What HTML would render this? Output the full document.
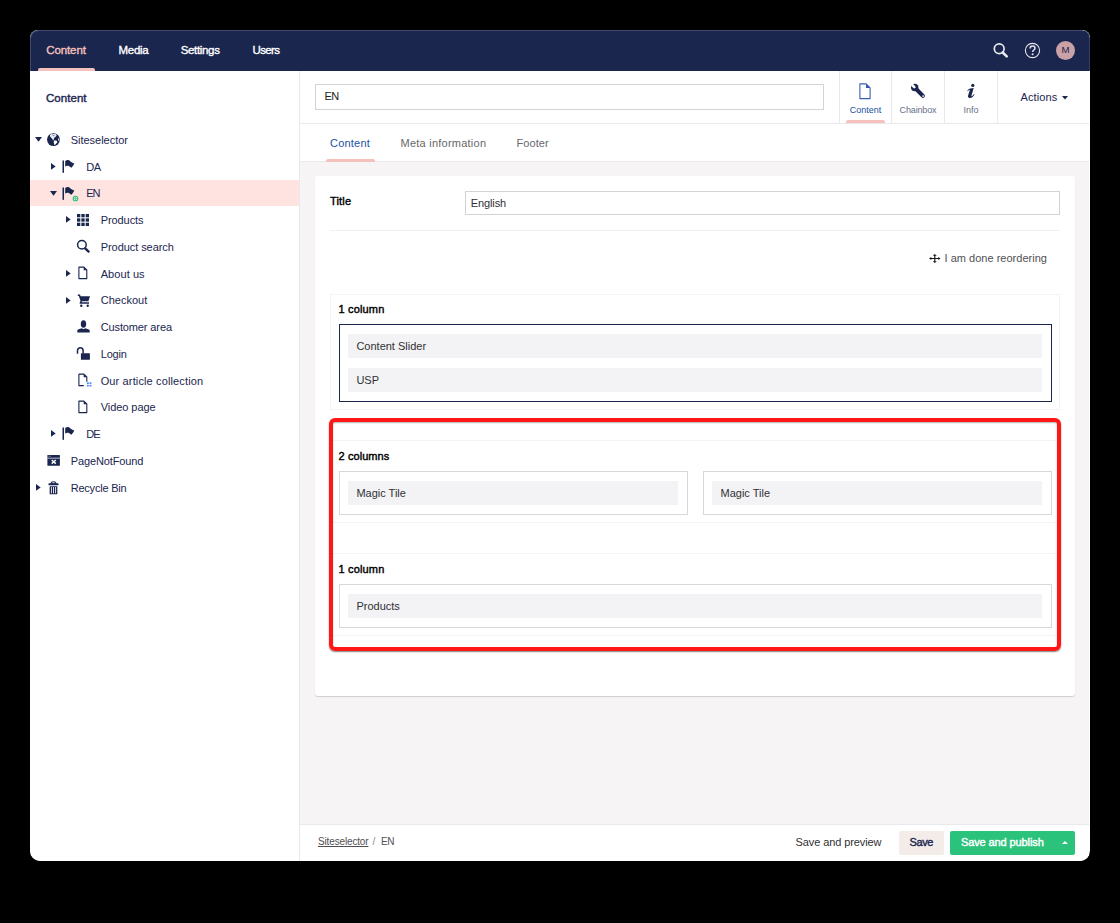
<!DOCTYPE html>
<html>
<head>
<meta charset="utf-8">
<title>Umbraco</title>
<style>
*{box-sizing:border-box;margin:0;padding:0}
html,body{width:1120px;height:923px;background:#000;overflow:hidden}
body{font-family:"Liberation Sans",sans-serif;font-size:11px;color:#1b264f;position:relative}
.abs{position:absolute}
.t{position:absolute;white-space:nowrap;line-height:14px;height:14px}
.b{-webkit-text-stroke:.4px currentColor}
svg{position:absolute;overflow:visible}
#win{position:absolute;left:30px;top:30px;width:1060px;height:831px;background:#fff;border-radius:8px 8px 10.500px 10.500px;overflow:hidden}
#hdr{position:absolute;left:0;top:0;width:1060px;height:41px;background:#1b264f;box-shadow:inset 1px 1px 0 rgba(255,255,255,.17),inset -1px 0 0 rgba(255,255,255,.12);border-radius:8px 8px 0 0}
#hdr .t{color:#fff;font-size:11.5px;-webkit-text-stroke:.35px currentColor}
#side{position:absolute;left:0;top:41px;width:270px;height:790px;background:#fff;border-right:1px solid #e9e9eb}
#ed{position:absolute;left:270px;top:41px;width:789px;height:790px;background:#f6f4f4;overflow:hidden}
#edh{position:absolute;left:0;top:0;width:790px;height:53px;background:#fff;border-bottom:1px solid #e9e9eb}
#tabs{position:absolute;left:0;top:53px;width:790px;height:38px;background:#fff;border-bottom:1px solid #ebe9e9}
#foot{position:absolute;left:0;top:753px;width:790px;height:37px;background:#fff;border-top:1px solid #e9e9eb}
#panel{position:absolute;left:15px;top:105px;width:760px;height:520px;background:#fff;border-radius:3px;box-shadow:0 1px 1px rgba(0,0,0,.16)}
.pink{position:absolute;background:#f5c1bc;height:3px;border-radius:2px 2px 0 0}
.row{position:absolute;background:#f3f3f5;height:24px}
.cell{position:absolute;border:1px solid #d8d7d9;background:#fff}
.sec{position:absolute;border:1px solid #f3f3f5;background:#fff}
.sep{position:absolute;top:0;width:1px;height:52px;background:#e9e9eb}
</style>
</head>
<body>
<div id="win">
  <!-- ===== top header ===== -->
  <div id="hdr">
    <span class="t" style="left:16.2px;top:13px;color:#f5c1bc;letter-spacing:-.09px">Content</span>
    <span class="t" style="left:88.5px;top:13px;letter-spacing:-.27px">Media</span>
    <span class="t" style="left:150.7px;top:13px;letter-spacing:-.33px">Settings</span>
    <span class="t" style="left:222.5px;top:13px;letter-spacing:-.63px">Users</span>
    <div class="pink" style="left:8px;top:38px;width:57px"></div>
    <svg style="left:960px;top:10px;opacity:.9" width="24" height="22" viewBox="0 0 24 22">
      <circle cx="9.2" cy="8.75" r="4.9" fill="none" stroke="#fff" stroke-width="1.7"/>
      <path d="M12.7 12.5 L16.700 16.400" stroke="#fff" stroke-width="2.600" stroke-linecap="round"/>
    </svg>
    <svg style="left:994px;top:12px;opacity:.88" width="17" height="17" viewBox="0 0 17 17">
      <circle cx="8.5" cy="8.5" r="7.1" fill="none" stroke="#fff" stroke-width="1.1"/>
      <path d="M6.1 6.6 C6.1 4.9 7.2 4.1 8.6 4.1 C10 4.1 11 5 11 6.3 C11 7.9 8.6 8.2 8.6 10.1" fill="none" stroke="#fff" stroke-width="1.5"/>
      <circle cx="8.6" cy="12.3" r="1" fill="#fff"/>
    </svg>
    <div class="abs" style="left:1026px;top:10.8px;width:19px;height:19px;border-radius:50%;background:#c9a1a6"></div>
    <span class="t" style="left:1026px;top:13.400px;width:19px;text-align:center;font-size:8.800px;-webkit-text-stroke:0;color:#1b264f;letter-spacing:0;transform:scaleX(1.1)">M</span>
  </div>

  <!-- ===== sidebar ===== -->
  <div id="side">
    <span class="t b" style="left:16px;top:20px;font-size:11.5px;letter-spacing:.04px">Content</span>
    
    <svg style="left:4.9px;top:66.3px" width="7" height="4.800" viewBox="0 0 7 4.8"><path d="M0 0L7 0L3.500 4.800Z" fill="#1b264f"/></svg>
    <svg style="left:15.8px;top:61.3px" width="14" height="14" viewBox="0 0 14 14" fill="#1b264f"><g transform="translate(.45 .6)"><circle cx="7" cy="7" r="6.4" fill="#1b264f"/><path d="M3.500 2.600C4 1.900 4.700 1.500 5.400 1.450C6.300 2 7.100 1.500 8 1.500C9 1.600 9.800 2 10.200 2.650C9.800 3.300 9.500 3.900 8.900 4.350C8.300 4.600 7.900 5.100 7.600 5.550C7.400 6.300 7.300 7 7.100 7.650L6.400 7.650C6.200 7 6 6.300 5.600 5.800C5 5.400 4.400 5 4 4.450C3.700 3.800 3.500 3.200 3.500 2.600Z" fill="#fff" opacity=".92"/><path d="M7.650 7.950C8.500 7.900 9.300 8 10.100 8.250C10.500 8.500 10.800 8.900 10.900 9.300C10.500 10 10.100 10.600 9.550 11.200C9.100 11.700 8.700 12.200 8.200 12.600C7.900 12.200 7.700 11.700 7.650 11.200C7.500 10.500 7.300 9.900 7.300 9.300C7.300 8.800 7.400 8.400 7.650 7.950Z" fill="#fff"/><path d="M12 5.500C12.400 5.700 12.700 6 12.800 6.350C12.900 7 12.850 7.700 12.700 8.250L11.800 8.250C11.650 7.800 11.550 7.300 11.600 6.900C11.650 6.400 11.800 5.900 12 5.500Z" fill="#fff" opacity=".8"/><ellipse cx="7.100" cy="3" rx="1.100" ry=".6" fill="#1b264f" opacity=".55"/></g></svg>
    <span class="t" style="left:40.7px;top:62.0px;letter-spacing:-0.02px">Siteselector</span>
    <svg style="left:20.7px;top:91.8px" width="4.7" height="6.800" viewBox="0 0 4.7 6.8"><path d="M0 0L4.700 3.400L0 6.800Z" fill="#1b264f"/></svg>
    <svg style="left:30.8px;top:88.0px" width="14" height="14" viewBox="0 0 14 14" fill="#1b264f"><rect x="1.500" y="1.500" width="1.500" height="12.300"/><path d="M4.200 2C5.100 1.200 6.200 .900 7.100 1C8.600 1.200 9.400 2.600 10.600 3.200C11.500 3.700 12.400 4.100 13.300 4.400C12.600 5.900 11.600 7.400 10.400 8.800C9.300 8.100 8.400 7 7.100 6.700C6.100 6.500 5.100 6.900 4.200 7.600Z"/></svg>
    <span class="t" style="left:56.2px;top:88.7px;letter-spacing:-0.44px">DA</span>
    <div class="abs" style="left:0;top:109px;width:269px;height:26px;background:#fee3e0"></div>
    <svg style="left:19.9px;top:119.8px" width="7" height="4.800" viewBox="0 0 7 4.8"><path d="M0 0L7 0L3.500 4.800Z" fill="#1b264f"/></svg>
    <svg style="left:30.8px;top:114.8px" width="14" height="14" viewBox="0 0 14 14" fill="#1b264f"><rect x="1.500" y="1.500" width="1.500" height="12.300"/><path d="M4.200 2C5.100 1.200 6.200 .900 7.100 1C8.600 1.200 9.400 2.600 10.600 3.200C11.500 3.700 12.400 4.100 13.300 4.400C12.600 5.900 11.600 7.400 10.400 8.800C9.300 8.100 8.400 7 7.100 6.700C6.100 6.500 5.100 6.900 4.200 7.600Z"/></svg>
    <svg style="left:41.6px;top:123.5px" width="7" height="7" viewBox="0 0 7 7"><circle cx="3.5" cy="3.5" r="2.3" fill="#fee3e0" stroke="#2bc37c" stroke-width="1.1"/><path d="M3.5 2.3V4.700M2.300 3.5H4.700" stroke="#2bc37c" stroke-width=".9"/></svg>
    <span class="t" style="left:56.2px;top:115.0px;letter-spacing:-0.94px">EN</span>
    <svg style="left:35.7px;top:145.3px" width="4.7" height="6.800" viewBox="0 0 4.7 6.8"><path d="M0 0L4.700 3.400L0 6.800Z" fill="#1b264f"/></svg>
    <svg style="left:45.8px;top:141.5px" width="14" height="14" viewBox="0 0 14 14" fill="#1b264f"><rect x="1.00" y="1.00" width="3.3" height="3.3"/><rect x="1.00" y="5.35" width="3.3" height="3.3"/><rect x="1.00" y="9.70" width="3.3" height="3.3"/><rect x="5.35" y="1.00" width="3.3" height="3.3"/><rect x="5.35" y="5.35" width="3.3" height="3.3"/><rect x="5.35" y="9.70" width="3.3" height="3.3"/><rect x="9.70" y="1.00" width="3.3" height="3.3"/><rect x="9.70" y="5.35" width="3.3" height="3.3"/><rect x="9.70" y="9.70" width="3.3" height="3.3"/></svg>
    <span class="t" style="left:70.7px;top:142.2px;letter-spacing:-0.08px">Products</span>
    <svg style="left:45.8px;top:168.2px" width="14" height="14" viewBox="0 0 14 14" fill="#1b264f"><circle cx="5.9" cy="5.8" r="4.3" fill="none" stroke="#1b264f" stroke-width="1.5"/><path d="M9.2 9.3L12.6 12.6" stroke="#1b264f" stroke-width="2.3" stroke-linecap="round"/></svg>
    <span class="t" style="left:70.7px;top:168.9px;letter-spacing:-0.06px">Product search</span>
    <svg style="left:35.7px;top:198.8px" width="4.7" height="6.800" viewBox="0 0 4.7 6.8"><path d="M0 0L4.700 3.400L0 6.800Z" fill="#1b264f"/></svg>
    <svg style="left:45.8px;top:195.0px" width="14" height="14" viewBox="0 0 14 14" fill="#1b264f"><path d="M2.9 1.1H7.9L10.8 4V12.600H2.900Z" fill="none" stroke="#1b264f" stroke-width="1.1" stroke-linejoin="round"/><path d="M7.700 1.100V4.200H10.800Z"/></svg>
    <span class="t" style="left:70.7px;top:195.7px;letter-spacing:0.07px">About us</span>
    <svg style="left:35.7px;top:225.5px" width="4.7" height="6.800" viewBox="0 0 4.7 6.8"><path d="M0 0L4.700 3.400L0 6.800Z" fill="#1b264f"/></svg>
    <svg style="left:45.8px;top:221.7px" width="14" height="14" viewBox="0 0 14 14" fill="#1b264f"><g transform="translate(0.8 0.7)"><path d="M1 0.900H3.200L3.800 2.500H13.200L11.600 7.600H5.200L4.800 8.600H12.200V10.100H3.400C2.900 10.100 2.600 9.600 2.900 9.100L3.700 7.300L2.100 2.200H1Z"/><circle cx="4.500" cy="12.100" r="1.200"/><circle cx="10.900" cy="12.100" r="1.200"/></g></svg>
    <span class="t" style="left:70.7px;top:222.4px;letter-spacing:0.01px">Checkout</span>
    <svg style="left:45.8px;top:248.4px" width="14" height="14" viewBox="0 0 14 14" fill="#1b264f"><g transform="translate(0.5 0.3)"><ellipse cx="7" cy="4.700" rx="2.700" ry="3.800"/><path d="M0.8 13.2V11.6C0.8 10.6 1.4 10.2 2.2 10L5.2 9C6.2 9.8 7.8 9.8 8.8 9L11.8 10C12.6 10.2 13.2 10.6 13.2 11.600V13.2Z"/></g></svg>
    <span class="t" style="left:70.7px;top:249.1px;letter-spacing:-0.12px">Customer area</span>
    <svg style="left:45.8px;top:275.1px" width="14" height="14" viewBox="0 0 14 14" fill="#1b264f"><g transform="translate(0.2 0.4)"><rect x="4.700" y="6.800" width="9" height="6.600" rx=".5"/><path d="M1.300 7.300V4.300C1.300 2.600 2.500 1.400 4.100 1.400C5.700 1.400 6.900 2.600 6.900 4.300V7" fill="none" stroke="#1b264f" stroke-width="1.5"/></g></svg>
    <span class="t" style="left:70.7px;top:275.8px;letter-spacing:-0.18px">Login</span>
    <svg style="left:45.8px;top:301.9px" width="14" height="14" viewBox="0 0 14 14" fill="#1b264f"><path d="M2.9 1.1H7.900L10.800 4V8.800M7.800 12.600H2.900V1.100" fill="none" stroke="#1b264f" stroke-width="1.1" stroke-linejoin="round"/><path d="M7.700 1.100V4.200H10.800Z"/><g fill="#4f8dff"><rect x="10.900" y="9.300" width="1.900" height="1.700"/><rect x="13.500" y="9.300" width="1.900" height="1.700"/><rect x="10.900" y="11.800" width="1.900" height="1.700"/><rect x="13.500" y="11.800" width="1.900" height="1.700"/></g></svg>
    <span class="t" style="left:70.7px;top:302.6px;letter-spacing:0.13px">Our article collection</span>
    <svg style="left:45.8px;top:328.6px" width="14" height="14" viewBox="0 0 14 14" fill="#1b264f"><path d="M2.9 1.1H7.9L10.8 4V12.600H2.900Z" fill="none" stroke="#1b264f" stroke-width="1.1" stroke-linejoin="round"/><path d="M7.700 1.100V4.200H10.800Z"/></svg>
    <span class="t" style="left:70.7px;top:329.3px;letter-spacing:-0.06px">Video page</span>
    <svg style="left:20.7px;top:359.1px" width="4.7" height="6.800" viewBox="0 0 4.7 6.8"><path d="M0 0L4.700 3.400L0 6.800Z" fill="#1b264f"/></svg>
    <svg style="left:30.8px;top:355.3px" width="14" height="14" viewBox="0 0 14 14" fill="#1b264f"><rect x="1.500" y="1.500" width="1.500" height="12.300"/><path d="M4.200 2C5.100 1.200 6.200 .900 7.100 1C8.600 1.200 9.400 2.600 10.600 3.200C11.500 3.700 12.400 4.100 13.300 4.400C12.600 5.900 11.600 7.400 10.400 8.800C9.300 8.100 8.400 7 7.100 6.700C6.100 6.500 5.100 6.900 4.200 7.600Z"/></svg>
    <span class="t" style="left:56.2px;top:356.0px;letter-spacing:-0.79px">DE</span>
    <svg style="left:15.8px;top:382.1px" width="14" height="14" viewBox="0 0 14 14" fill="#1b264f"><rect x="1.400" y="2" width="12.500" height="10.850" rx=".5"/><rect x="1.400" y="4.750" width="12.500" height=".800" fill="#fff" opacity=".85"/><rect x="2.300" y="2.800" width="2.600" height=".700" fill="#fff" opacity=".5"/><path d="M5.700 7L9.800 10.600M9.800 7L5.700 10.600" stroke="#fff" stroke-width="1.400"/></svg>
    <span class="t" style="left:40.7px;top:382.8px;letter-spacing:-0.12px">PageNotFound</span>
    <svg style="left:5.7px;top:412.6px" width="4.7" height="6.800" viewBox="0 0 4.7 6.8"><path d="M0 0L4.700 3.400L0 6.800Z" fill="#1b264f"/></svg>
    <svg style="left:15.8px;top:408.8px" width="14" height="14" viewBox="0 0 14 14" fill="#1b264f"><g transform="translate(.5 .65)"><path d="M4 3C4 1.300 5.200 .500 7 .500C8.800 .500 10 1.300 10 3Z"/><rect x="5.800" y="1.500" width="2.400" height=".900" rx=".4" fill="#fff"/><rect x="2" y="2.700" width="10" height="1.900" rx=".6"/><rect x="3.150" y="5.600" width="7.700" height="7.900" rx=".4"/><rect x="4.450" y="6.400" width=".850" height="6.300" fill="#fff"/><rect x="6.580" y="6.400" width=".850" height="6.300" fill="#fff"/><rect x="8.700" y="6.400" width=".850" height="6.300" fill="#fff"/></g></svg>
    <span class="t" style="left:40.7px;top:409.5px;letter-spacing:-0.21px">Recycle Bin</span>
    
  </div>

  <!-- ===== editor ===== -->
  <div id="ed">
    <div id="edh">
      <div class="abs" style="left:15px;top:13px;width:509px;height:26px;border:1px solid #d3d2d4;background:#fff"></div>
      <span class="t" style="left:24.6px;top:18.100px;font-size:11px;color:#1c1c1c;letter-spacing:-.6px">EN</span>
      <div class="sep" style="left:539px"></div><div class="sep" style="left:591px"></div><div class="sep" style="left:644px"></div><div class="sep" style="left:697px"></div>
      <svg style="left:558px;top:11px" width="14" height="18" viewBox="0 0 14 18"><path d="M1.9 1.9H8.2L12.1 5.8V16.600H1.9Z" fill="none" stroke="#3a5fb0" stroke-width="1.1" stroke-linejoin="round"/><path d="M8 1.9V6H12.100Z" fill="#2f55a8"/></svg>
      <span class="t" style="left:540px;top:32px;width:51px;text-align:center;font-size:9px;color:#2152a3">Content</span>
      <div class="pink" style="left:546px;top:49px;width:39px"></div>
      <svg style="left:610px;top:12px" width="16" height="16" viewBox="0 0 16 16"><circle cx="4.7" cy="4.500" r="3.700" fill="#1b264f"/><path d="M5.200 5L12.900 12.900" stroke="#1b264f" stroke-width="4" stroke-linecap="round"/><path d="M4.300 4.100L0 -0.200" stroke="#fff" stroke-width="2.700" stroke-linecap="round"/><circle cx="13.1" cy="13.1" r=".85" fill="#fff"/></svg>
      <span class="t" style="left:592px;top:32px;width:52px;text-align:center;font-size:9px;color:#68708c;letter-spacing:-.14px">Chainbox</span>
      <svg style="left:664px;top:11px" width="14" height="18" viewBox="0 0 14 18" fill="#1b264f"><circle cx="8.800" cy="3.400" r="1.600"/><path d="M3.300 8.900C4 7.600 5 6.700 6.400 6.500L9.700 6.100L7.500 13.600C7.300 14.200 7.700 14.300 8.200 13.900C8.900 13.300 9.500 12.700 10 12.100L10.600 12.500C9.400 14.300 8 16.100 5.900 16.100C4.300 16.100 3.700 15 4.100 13.600L5.700 8.400C5.850 7.900 5.600 7.700 5.100 8C4.600 8.300 4.200 8.800 3.800 9.300Z"/></svg>
      <span class="t" style="left:645px;top:32px;width:52px;text-align:center;font-size:9px;color:#68708c">Info</span>
      <span class="t" style="left:720.5px;top:19.400px;font-size:11px;color:#1b264f;letter-spacing:.1px">Actions</span>
      <svg style="left:761.500px;top:24.500px" width="6" height="4" viewBox="0 0 6 4"><path d="M0 0H6L3 3.600Z" fill="#1b264f"/></svg>
    </div>
    <div id="tabs">
      <span class="t" style="left:30px;top:12px;color:#2152a3;letter-spacing:.21px">Content</span>
      <span class="t" style="left:100.5px;top:12px;color:#68676b;letter-spacing:.24px">Meta information</span>
      <span class="t" style="left:216.5px;top:12px;color:#68676b;letter-spacing:.08px">Footer</span>
      <div class="pink" style="left:26px;top:35px;width:49px"></div>
    </div>
    <div id="panel">
      <span class="t b" style="left:15px;top:18px;color:#000;letter-spacing:.16px">Title</span>
      <div class="abs" style="left:150px;top:15px;width:595px;height:24px;border:1px solid #d3d2d4;background:#fff"></div>
      <span class="t" style="left:155.7px;top:20px;color:#303033;letter-spacing:-.1px">English</span>
      <div class="abs" style="left:15px;top:54px;width:730px;height:1px;background:#f1f0f2"></div>
      <svg style="left:614px;top:78.200px" width="11.600" height="9" viewBox="0 0 12 12" preserveAspectRatio="none"><path d="M6 0L8.100 2.400H6.600V5.400H9.600V3.900L12 6L9.600 8.100V6.600H6.600V9.600H8.100L6 12L3.900 9.600H5.400V6.600H2.400V8.100L0 6L2.400 3.900V5.400H5.400V2.400H3.900Z" fill="#1a1a1a"/></svg>
      <span class="t" style="left:629.6px;top:75px;color:#515054;letter-spacing:.01px">I am done reordering</span>

      <div class="sec" style="left:15px;top:118px;width:730px;height:116px"></div>
      <span class="t b" style="left:23.6px;top:126px;color:#000;letter-spacing:.15px">1 column</span>
      <div class="cell" style="left:24px;top:148px;width:713px;height:78px;border-color:#1b264f"></div>
      <div class="row" style="left:33px;top:158px;width:694px"></div>
      <span class="t" style="left:41.4px;top:163px;color:#303033">Content Slider</span>
      <div class="row" style="left:33px;top:192px;width:694px"></div>
      <span class="t" style="left:41.4px;top:197px;color:#303033">USP</span>

      <div class="sec" style="left:15px;top:264px;width:730px;height:83px"></div>
      <span class="t b" style="left:23.6px;top:273px;color:#000;letter-spacing:.07px">2 columns</span>
      <div class="cell" style="left:24px;top:295px;width:349px;height:44px"></div>
      <div class="row" style="left:33px;top:305px;width:330px"></div>
      <span class="t" style="left:41.4px;top:310px;color:#303033">Magic Tile</span>
      <div class="cell" style="left:388px;top:295px;width:349px;height:44px"></div>
      <div class="row" style="left:397px;top:305px;width:330px"></div>
      <span class="t" style="left:405.5px;top:310px;color:#303033">Magic Tile</span>

      <div class="sec" style="left:15px;top:377px;width:730px;height:83px"></div>
      <span class="t b" style="left:23.6px;top:386px;color:#000;letter-spacing:.15px">1 column</span>
      <div class="cell" style="left:24px;top:408px;width:713px;height:44px"></div>
      <div class="row" style="left:33px;top:418px;width:694px"></div>
      <span class="t" style="left:41.4px;top:423px;color:#303033">Products</span>

      <div class="abs" style="left:14px;top:242.400px;width:732px;height:232.200px;border:4px solid #ff1616;border-radius:6px;box-shadow:0 1px 1.5px rgba(0,0,0,.5),inset 0 1px 1.5px rgba(0,0,0,.3)"></div>
    </div>
    <div id="foot">
      <span class="t" style="left:18px;top:9.500px;font-size:10px;color:#515054;text-decoration:underline;letter-spacing:-.15px">Siteselector</span>
      <span class="t" style="left:72.500px;top:9.500px;font-size:10px;color:#8a898d">/</span>
      <span class="t" style="left:81px;top:9.500px;font-size:10px;color:#515054;letter-spacing:-.5px">EN</span>
      <span class="t" style="left:495.600px;top:10px;color:#303033;letter-spacing:-.1px">Save and preview</span>
      <div class="abs" style="left:599px;top:6px;width:45px;height:24px;border-radius:2px;background:#f3ece8"></div>
      <span class="t b" style="left:599px;top:10px;width:45px;text-align:center;color:#1b264f;letter-spacing:-.36px;text-indent:-.36px">Save</span>
      <div class="abs" style="left:650px;top:6px;width:125px;height:24px;border-radius:2px;background:#2bc37c"></div>
      <span class="t b" style="left:661px;top:10px;color:#fff;letter-spacing:-.11px">Save and publish</span>
      <svg style="left:762px;top:15.700px" width="6" height="4" viewBox="0 0 6 4"><path d="M0 3H6L3 0Z" fill="#fff"/></svg>
    </div>
  </div>
</div>
</body>
</html>
